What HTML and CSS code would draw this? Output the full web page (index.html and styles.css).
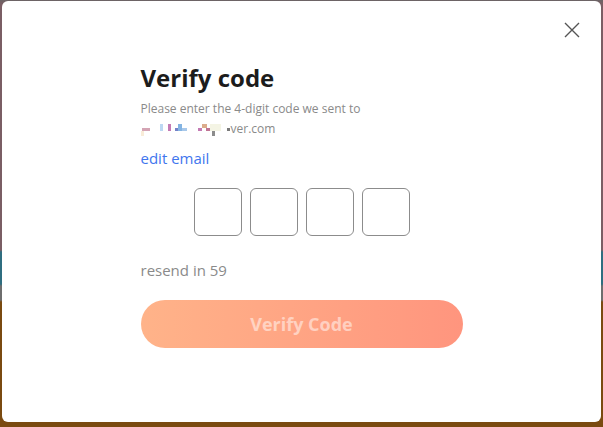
FILE: index.html
```html
<!DOCTYPE html>
<html lang="en">
<head>
    <meta charset="UTF-8">
    <meta name="viewport" content="width=device-width, initial-scale=1.0">
    <title>Verify code</title>
    <link rel="stylesheet" href="styles.css">
</head>
<body>
    <div class="backdrop">
        <div class="modal">
            <button class="close-btn" aria-label="close">
                <svg width="16" height="16" viewBox="0 0 16 16">
                    <path d="M1 1 L15 15 M15 1 L1 15" stroke="#555" stroke-width="1.4" fill="none"/>
                </svg>
            </button>

            <div class="verify-body">
                <h1 class="title">Verify code</h1>
                <p class="subtitle">Please enter the 4-digit code we sent to</p>
                <p class="email">
                    <!-- masked part of the address -->
                    <svg class="masked" width="90" height="14" viewBox="0 0 90 14">
                        <rect x="0" y="8" width="3" height="5" fill="#f8ecd8"/>
                        <rect x="1" y="5" width="8" height="3" fill="#d4a4b4"/>
                        <rect x="19" y="1" width="3" height="7" fill="#bcd8f2"/>
                        <rect x="27" y="1" width="3" height="7" fill="#c47ab4"/>
                        <rect x="34" y="5" width="3" height="3" fill="#7482c8"/>
                        <rect x="37" y="1" width="4" height="7" fill="#84b4e2"/>
                        <rect x="41" y="5" width="5" height="3" fill="#a8c8ea"/>
                        <rect x="57" y="5" width="4" height="3" fill="#c47ab4"/>
                        <rect x="61" y="1" width="5" height="4" fill="#dcac8c"/>
                        <rect x="65" y="5" width="4" height="3" fill="#c07494"/>
                        <rect x="69" y="1" width="11" height="7" fill="#f4f4e4"/>
                        <rect x="71" y="8" width="3" height="5" fill="#8c8c8c"/>
                        <rect x="86" y="5" width="3" height="3" fill="#7a7a7a"/>
                    </svg>ver.com
                </p>
                <a class="edit-link" href="#">edit email</a>

                <div class="code-inputs">
                    <input class="code-box" maxlength="1">
                    <input class="code-box" maxlength="1">
                    <input class="code-box" maxlength="1">
                    <input class="code-box" maxlength="1">
                </div>

                <p class="resend">resend in 59</p>

                <button class="verify-btn" disabled>Verify Code</button>
            </div>
        </div>
    </div>
</body>
</html>
```

FILE: styles.css
```css
* { box-sizing: border-box; }

body {
    margin: 0;
    font-family: "Open Sans", Arial, sans-serif;
    background: linear-gradient(180deg,
        #6b6466 0px, #7a5e64 4px, #7a5e64 250px,
        #2f6e80 252px, #2f6e80 284px,
        #6e6e6e 286px, #6e6e6e 300px,
        #7a4a10 302px, #7a4a10 427px);
}
.backdrop {
    height: 427px;
    padding: 1px 2px 5px 2px;
}
.modal {
    position: relative;
    height: 100%;
    background: #fff;
    border-radius: 6px;
}
.close-btn {
    position: absolute;
    top: 21px;
    right: 21px;
    padding: 0;
    border: none;
    background: none;
    cursor: pointer;
    line-height: 0;
}
.verify-body {
    width: 322px;
    margin: 0 auto;
    padding-top: 59px;
}
.title {
    margin: 0;
    font-size: 24px;
    font-weight: 700;
    line-height: 36px;
    color: #1c1c1c;
}
.subtitle {
    margin: 4px 0 0;
    font-size: 12px;
    line-height: 18px;
    color: #8a8a8a;
}
.email {
    margin: 2px 0 0;
    font-size: 12px;
    line-height: 18px;
    color: #8a8a8a;
    display: flex;
    align-items: center;
}
.masked { display: block; margin-top: 1px; }
.edit-link {
    display: block;
    margin-top: 10px;
    font-size: 15px;
    line-height: 21px;
    color: #3f76ee;
    text-decoration: none;
}
.code-inputs {
    display: flex;
    justify-content: center;
    gap: 8px;
    margin-top: 19px;
}
.code-box {
    width: 48px;
    height: 48px;
    border: 1px solid #8c8c8c;
    border-radius: 6px;
    text-align: center;
    font-size: 20px;
}
.resend {
    margin: 24px 0 0;
    font-size: 15px;
    line-height: 21px;
    color: #8a8a8a;
}
.verify-btn {
    display: block;
    width: 100%;
    height: 48px;
    margin-top: 19px;
    border: none;
    border-radius: 24px;
    background: linear-gradient(90deg, #ffb389, #ff957e);
    font-family: inherit;
    font-size: 18px;
    font-weight: 700;
    color: rgba(255, 255, 255, 0.5);
}
```
